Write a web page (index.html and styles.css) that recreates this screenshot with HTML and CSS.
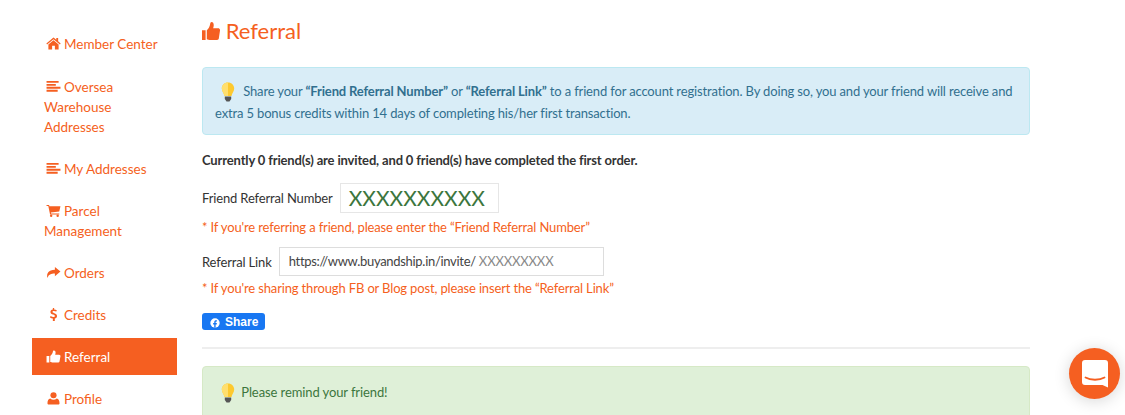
FILE: index.html
```html
<!DOCTYPE html>
<html lang="en">
<head>
    <meta charset="UTF-8">
    <meta name="viewport" content="width=device-width, initial-scale=1.0">
    <title>Referral</title>
    <link rel="stylesheet" href="styles.css">
</head>
<body>
    <div class="page">
        <nav class="sidebar">
            <a class="nav-item nav-first">
                <svg class="nav-icon" viewBox="0 0 16 14"><path d="M8 0.5 0.3 7l.8 1L8 2.3 14.9 8l.8-1L13 4.7V1h-2v2L8 .5ZM8 3.4 2.5 8v5.5h4V9.500h3v4h4V8L8 3.400Z"/></svg>
                Member Center
            </a>
            <a class="nav-item">
                <svg class="nav-icon" viewBox="0 0 16 14"><path d="M.5 1h13v2H.500ZM.5 4.200h10v2H.500ZM.5 7.400h15v2H.500ZM.5 10.600h12v2H.500Z"/></svg>
                Oversea Warehouse Addresses
            </a>
            <a class="nav-item">
                <svg class="nav-icon" viewBox="0 0 16 14"><path d="M.5 1h13v2H.500ZM.5 4.200h10v2H.500ZM.5 7.400h15v2H.500ZM.5 10.600h12v2H.500Z"/></svg>
                My Addresses
            </a>
            <a class="nav-item">
                <svg class="nav-icon" viewBox="0 0 16 14"><path d="M.5 1h2.700l.4 1.400H15.500l-1.300 5.800-9 1 .2 1h8.800v1.200H4.300L2.400 2.200H.500Z"/><circle cx="5.500" cy="12.600" r="1.300"/><circle cx="12.500" cy="12.600" r="1.300"/></svg>
                Parcel Management
            </a>
            <a class="nav-item">
                <svg class="nav-icon" viewBox="0 0 16 14"><path d="M9.500 1 15.500 6l-6 5V8C5.500 8 2.500 9 1.500 13 .2 8 2.500 4 9.500 4Z"/></svg>
                Orders
            </a>
            <a class="nav-item">
                <svg class="nav-icon" viewBox="0 0 16 14"><path d="M7.300 0h1.400v1.500c1.200.1 2.200.5 3 1.100l-.8 1.300c-.8-.5-1.600-.8-2.400-.8-1 0-1.600.4-1.600 1 0 .7.700 1 2 1.500 1.600.6 2.900 1.200 2.900 2.900 0 1.500-1 2.500-2.400 2.800V14H7.300v-2.700c-1.200-.1-2.400-.6-3.200-1.400l.9-1.200c.9.700 1.900 1.100 2.800 1.100 1.100 0 1.700-.4 1.700-1.100 0-.7-.7-1.100-2-1.600C6 6.500 4.700 5.900 4.700 4.200c0-1.400 1-2.400 2.600-2.700Z"/></svg>
                Credits
            </a>
            <a class="nav-item nav-active">
                <svg class="nav-icon" viewBox="0 0 16 14"><path d="M.5 6.500h3v7h-3ZM4.500 6.500c1.500-1 2.500-2.700 2.800-4.500.1-1 .5-1.500 1.200-1.500 1.300 0 2 1.200 1.700 3L9.800 5h4.200c1 0 1.700.8 1.500 1.700l-1 5.800c-.2.700-.7 1-1.400 1H7.500c-1.200 0-2-.6-3-.6Z"/></svg>
                Referral
            </a>
            <a class="nav-item">
                <svg class="nav-icon" viewBox="0 0 16 14"><circle cx="8" cy="3.500" r="3.300"/><path d="M3 13.500c-1 0-1.500-.5-1.500-1.500 0-2.500 1-5 3-5 1 .9 2.200 1.300 3.500 1.300s2.500-.4 3.500-1.300c2 0 3 2.500 3 5 0 1-.5 1.500-1.500 1.500Z"/></svg>
                Profile
            </a>
        </nav>

        <main class="content">
            <h1 class="page-title">
                <svg class="title-icon" viewBox="0.5 0.5 15 13" preserveAspectRatio="none"><path d="M.5 6.500h3v7h-3ZM4.500 6.500c1.500-1 2.500-2.700 2.800-4.500.1-1 .5-1.500 1.200-1.500 1.300 0 2 1.200 1.700 3L9.800 5h4.200c1 0 1.700.8 1.500 1.700l-1 5.800c-.2.700-.7 1-1.400 1H7.500c-1.200 0-2-.6-3-.6Z"/></svg>
                Referral
            </h1>

            <div class="alert alert-info">
                <svg class="bulb" viewBox="0 0 14 20"><path fill="#fdc92f" d="M7 .5C3.300.5.800 3.200.800 6.500c0 3 2.200 4.300 2.700 7.500h7c.5-3.200 2.700-4.500 2.700-7.500C13.200 3.200 10.700.500 7 .500Z"/><path fill="#ffdf6e" d="M7 .5C3.300.5.800 3.200.800 6.500c0 3 2.200 4.300 2.700 7.500H7Z"/><path fill="#555" d="M3.800 14.500h6.400v2.500l-1.700 2.500h-3l-1.700-2.500Z"/></svg>
                Share your <b>“Friend Referral Number”</b> or <b>“Referral Link”</b> to a friend for account registration. By doing so, you and your friend will receive and extra 5 bonus credits within 14 days of completing his/her first transaction.
            </div>

            <p class="status">Currently 0 friend(s) are invited, and 0 friend(s) have completed the first order.</p>

            <div class="field-row">
                <span class="field-label">Friend Referral Number</span>
                <div class="code-box">XXXXXXXXXX</div>
            </div>
            <p class="hint">* If you're referring a friend, please enter the “Friend Referral Number”</p>

            <div class="field-row field-link">
                <span class="field-label">Referral Link</span>
                <div class="link-box">https://www.buyandship.in/invite/ <span class="link-code">XXXXXXXXX</span></div>
            </div>
            <p class="hint hint-link">* If you're sharing through FB or Blog post, please insert the “Referral Link”</p>

            <a class="share-btn">
                <svg class="fb-icon" viewBox="0 0 16 16"><circle cx="8" cy="8" r="7.500" fill="#fff"/><path fill="#1877f2" d="M6.800 15.500V10.200H5V8h1.800V6.400c0-1.900 1.100-2.900 2.800-2.900.8 0 1.500.1 1.500.1v1.900h-.9c-.9 0-1.200.6-1.200 1.200V8h2l-.3 2.200H9v5.300Z"/></svg>
                Share
            </a>

            <hr class="divider">

            <div class="alert alert-success">
                <svg class="bulb" viewBox="0 0 14 20"><path fill="#fdc92f" d="M7 .5C3.300.5.800 3.200.800 6.500c0 3 2.200 4.300 2.700 7.500h7c.5-3.200 2.700-4.500 2.700-7.500C13.200 3.200 10.700.500 7 .500Z"/><path fill="#ffdf6e" d="M7 .5C3.300.5.800 3.200.800 6.500c0 3 2.200 4.300 2.700 7.500H7Z"/><path fill="#555" d="M3.800 14.500h6.400v2.500l-1.700 2.500h-3l-1.700-2.500Z"/></svg>
                Please remind your friend!
            </div>
        </main>
    </div>

    <div class="chat-btn">
        <svg viewBox="0 0 26 28" width="26" height="28"><path fill="#fff" d="M3 0h20a3 3 0 0 1 3 3v24.500L20.500 25H3a3 3 0 0 1-3-3V3a3 3 0 0 1 3-3Z"/><path fill="none" stroke="#f55f21" stroke-width="1.800" stroke-linecap="round" d="M3.500 17.500c5 3 14 3 19 0"/></svg>
    </div>
</body>
</html>
```

FILE: styles.css
```css
html, body {
    margin: 0;
    height: 100%;
    overflow: hidden;
}

body {
    font-family: Lato, 'Open Sans', sans-serif;
    font-size: 13px;
    letter-spacing: -0.15px;
    color: #333333;
    background: #FFFFFF;
}

.page {
    display: flex;
    gap: 25px;
    height: 415px;
    overflow: hidden;
    padding-left: 32px;
}

/* sidebar */
.sidebar {
    flex: 0 0 145px;
    display: flex;
    flex-direction: column;
    gap: 5px;
    padding-top: 25px;
}

.nav-item {
    display: block;
    padding: 8.5px 12px;
    font-size: 13.5px;
    line-height: 20px;
    letter-spacing: 0;
    color: #f55f21;
}

.nav-first {
    margin-bottom: 1px;
}

.nav-active {
    background: #f55f21;
    color: #FFFFFF;
}

.nav-icon {
    width: 15px;
    height: 13px;
    margin: 0 0 0 1.500px;
    fill: currentColor;
    vertical-align: -1.500px;
}

/* main column */
.content {
    flex: 0 0 828px;
}

.page-title {
    margin: 17px 0 22px;
    font-size: 22px;
    line-height: 28px;
    font-weight: 400;
    letter-spacing: 0;
    color: #f55f21;
}

.title-icon {
    width: 18px;
    height: 18px;
    fill: currentColor;
    vertical-align: -1px;
}

.alert {
    border: 1px solid transparent;
    border-radius: 4px;
    padding: 12px 12px 10px;
    line-height: 22px;
    letter-spacing: -0.15px;
}

.alert-info {
    background: #d9edf7;
    border-color: #bce8f1;
    color: #31708f;
}

.alert-info b {
    font-weight: 700;
}

.alert-success {
    background: #dff0d8;
    border-color: #d6e9c6;
    color: #3c763d;
    margin-top: 17px;
    height: 60px;
    padding-top: 14px;
    letter-spacing: -0.1px;
}

.alert-success .bulb {
    margin-right: 3px;
}

.bulb {
    width: 14px;
    height: 20px;
    margin: -4px 5px -4px 6px;
    vertical-align: -1.500px;
}

.status {
    margin: 15px 0 0;
    line-height: 20px;
    font-weight: 700;
}

.field-row {
    display: flex;
    align-items: center;
    margin-top: 13px;
}

.field-link {
    margin-top: 10px;
}

.field-label {
    margin-right: 7px;
}

.code-box {
    width: 159px;
    height: 30px;
    box-sizing: border-box;
    padding-left: 8px;
    border: 1px solid #e6e6e6;
    font-size: 21px;
    line-height: 28px;
    letter-spacing: 0;
    color: #3c763d;
}

.link-box {
    width: 325px;
    height: 29px;
    box-sizing: border-box;
    padding-left: 9px;
    border: 1px solid #dddddd;
    line-height: 27px;
    letter-spacing: -0.3px;
    color: #444444;
}

.link-code {
    letter-spacing: -0.15px;
    color: #888888;
}

.hint {
    margin: 4px 0 0;
    line-height: 20px;
    color: #f55f21;
}

.hint-link {
    margin-top: 2px;
}

.share-btn {
    display: flex;
    align-items: center;
    gap: 5px;
    width: 63px;
    height: 17px;
    box-sizing: border-box;
    margin-top: 15px;
    padding-left: 8px;
    border-radius: 3px;
    background: #1877f2;
    color: #FFFFFF;
    font-family: 'Liberation Sans', sans-serif;
    font-size: 12px;
    font-weight: 700;
    letter-spacing: 0;
}

.fb-icon {
    width: 10px;
    height: 10px;
    margin-top: 2px;
}

.divider {
    margin: 17px 0 0;
    border: none;
    border-top: 2px solid #eeeeee;
}

/* floating chat button */
.chat-btn {
    position: absolute;
    left: 1069px;
    top: 348px;
    width: 51px;
    height: 51px;
    border-radius: 50%;
    background: #f55f21;
    box-shadow: 0 2px 16px rgba(0, 0, 0, 0.16);
    display: flex;
    align-items: center;
    justify-content: center;
}
```
